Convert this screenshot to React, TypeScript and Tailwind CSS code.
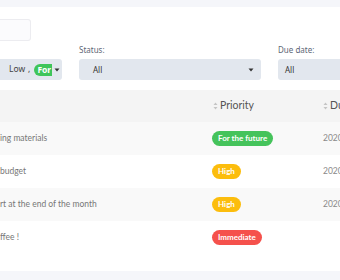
import React from "react";

const SortIcon = () => (
  <svg width="5" height="8" viewBox="0 0 5 8" className="shrink-0">
    <path d="M2.5 0.5 L4.5 3 L0.5 3 Z" fill="#c4c4c4" />
    <path d="M2.5 7.5 L4.5 5 L0.5 5 Z" fill="#c4c4c4" />
  </svg>
);

const Caret = () => (
  <svg width="6" height="4" viewBox="0 0 6 4" className="shrink-0">
    <path d="M0.5 0.5 L5.5 0.5 L3 3.5 Z" fill="#333" />
  </svg>
);

const rows = [
  { task: "ing materials", badge: "For the future", color: "bg-[#45c35b]", date: "2020", bg: "bg-[#f9f9f9]" },
  { task: "budget", badge: "High", color: "bg-[#fcbd0d]", date: "2020", bg: "bg-white" },
  { task: "rt at the end of the month", badge: "High", color: "bg-[#fcbd0d]", date: "2020", bg: "bg-[#f9f9f9]" },
  { task: "ffee !", badge: "Immediate", color: "bg-[#f5514c]", date: "", bg: "bg-white" },
];

export default function App() {
  return (
    <div className="w-[340px] h-[280px] overflow-hidden bg-[#f5f6fa] pt-[7px]" style={{ fontFamily: "Lato, 'Noto Sans', sans-serif" }}>
      <div className="bg-white h-[264px] overflow-hidden">
        <div className="pt-[12px] h-[34px]">
          <div className="w-[31px] h-[22px] border border-[#ececf0] border-l-0 rounded-r-[3px] bg-[#fbfbfd]" />
        </div>
        <div className="flex gap-[17px] h-[49px] w-[500px]" style={{ fontFamily: "'Noto Sans', sans-serif" }}>
          <div className="w-[62px] shrink-0 pt-[18px]">
            <div className="h-[21px] bg-[#e2e7ee] rounded-r-[3px] flex items-center pl-[9px] text-[8.5px] text-[#444]">
              <span>Low</span>
              <span className="ml-[3px]">,</span>
              <div className="ml-[4px] w-[18px] h-[12px] overflow-hidden rounded-l-full shrink-0">
                <span className="block bg-[#3fc55a] text-white font-bold text-[8.5px] leading-[12px] pl-[3px] whitespace-nowrap w-[60px]">For the future</span>
              </div>
              <div className="ml-[2px]"><Caret /></div>
            </div>
          </div>
          <div className="w-[182px] shrink-0">
            <div className="text-[8px] text-[#5e6776] leading-[10px] pt-[4px] h-[18px]">Status:</div>
            <div className="h-[21px] bg-[#e2e7ee] rounded-[3px] flex items-center justify-between pl-[14px] pr-[7px] text-[8px] text-[#333]">
              <span>All</span>
              <Caret />
            </div>
          </div>
          <div className="w-[100px] shrink-0">
            <div className="text-[8px] text-[#5e6776] leading-[10px] pt-[4px] h-[18px]">Due date:</div>
            <div className="h-[21px] bg-[#e2e7ee] rounded-l-[3px] flex items-center pl-[7px] text-[8px] text-[#333]">
              <span>All</span>
            </div>
          </div>
        </div>
        <div className="bg-[#f4f4f4] h-[32px] flex items-center text-[10.5px] text-[#555] w-[500px]">
          <div className="w-[212px] shrink-0" />
          <div className="w-[111px] shrink-0 flex items-center gap-[2px] pl-[1px]">
            <SortIcon />
            <span>Priority</span>
          </div>
          <div className="flex items-center gap-[2px] whitespace-nowrap">
            <SortIcon />
            <span>Due date</span>
          </div>
        </div>
        {rows.map((r, i) => (
          <div key={i} className={`${r.bg} h-[33px] flex items-center text-[8.5px] text-[#777] w-[500px]`}>
            <div className="w-[212px] shrink-0 whitespace-nowrap overflow-hidden">{r.task}</div>
            <div className="w-[111px] shrink-0">
              <span className={`${r.color} inline-block rounded-full text-white font-bold text-[8px] leading-[15px] px-[6px] whitespace-nowrap`}>{r.badge}</span>
            </div>
            <div className="text-[#8a8a8a] whitespace-nowrap">{r.date}</div>
          </div>
        ))}
      </div>
    </div>
  );
}
